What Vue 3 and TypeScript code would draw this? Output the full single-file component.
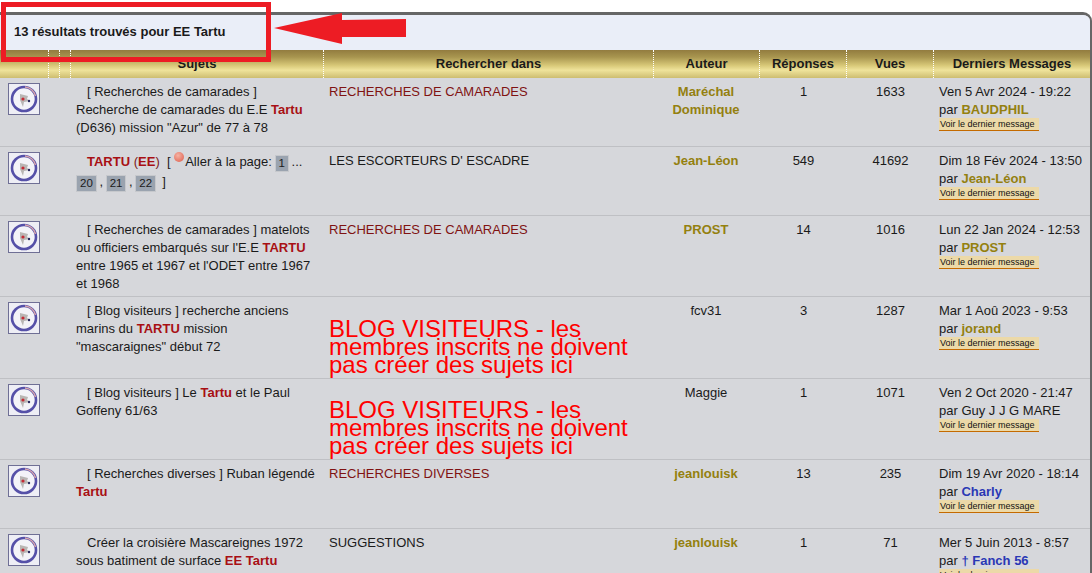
<script setup lang="ts">
interface Part { t: string; c?: string; br?: boolean }
interface Row {
  h: number
  subject: Part[]
  pager?: boolean
  forum: string
  forumKind: 'dark' | 'black' | 'big'
  author: string
  authorPlain?: boolean
  replies: string
  views: string
  date: string
  by: string
  byKind: 'gold' | 'blue' | 'black'
}
const rows: Row[] = [
  { h: 69, subject: [{ t: '[ Recherches de camarades ] Recherche de camarades du E.E ' }, { t: 'Tartu', c: 'hl' }, { t: ' (D636) mission "Azur" de 77 à 78' }], forum: 'RECHERCHES DE CAMARADES', forumKind: 'dark', author: 'Maréchal Dominique', replies: '1', views: '1633', date: 'Ven 5 Avr 2024 - 19:22', by: 'BAUDPHIL', byKind: 'gold' },
  { h: 69, subject: [], pager: true, forum: "LES ESCORTEURS D' ESCADRE", forumKind: 'black', author: 'Jean-Léon', replies: '549', views: '41692', date: 'Dim 18 Fév 2024 - 13:50', by: 'Jean-Léon', byKind: 'gold' },
  { h: 81, subject: [{ t: '[ Recherches de camarades ] matelots', br: true }, { t: 'ou officiers embarqués sur l\'E.E ' }, { t: 'TARTU', c: 'hl' }, { t: ' entre 1965 et 1967 et l\'ODET entre 1967 et 1968' }], forum: 'RECHERCHES DE CAMARADES', forumKind: 'dark', author: 'PROST', replies: '14', views: '1016', date: 'Lun 22 Jan 2024 - 12:53', by: 'PROST', byKind: 'gold' },
  { h: 82, subject: [{ t: '[ Blog visiteurs ] recherche anciens marins du ' }, { t: 'TARTU', c: 'hl' }, { t: ' mission "mascaraignes" début 72' }], forum: 'BLOG VISITEURS - les membres inscrits ne doivent pas créer des sujets ici', forumKind: 'big', author: 'fcv31', authorPlain: true, replies: '3', views: '1287', date: 'Mar 1 Aoû 2023 - 9:53', by: 'jorand', byKind: 'gold' },
  { h: 81, subject: [{ t: '[ Blog visiteurs ] Le ' }, { t: 'Tartu', c: 'hl' }, { t: ' et le Paul Goffeny 61/63' }], forum: 'BLOG VISITEURS - les membres inscrits ne doivent pas créer des sujets ici', forumKind: 'big', author: 'Maggie', authorPlain: true, replies: '1', views: '1071', date: 'Ven 2 Oct 2020 - 21:47', by: 'Guy J J G MARE', byKind: 'black' },
  { h: 69, subject: [{ t: '[ Recherches diverses ] Ruban légendé ' }, { t: 'Tartu', c: 'hl' }], forum: 'RECHERCHES DIVERSES', forumKind: 'dark', author: 'jeanlouisk', replies: '13', views: '235', date: 'Dim 19 Avr 2020 - 18:14', by: 'Charly', byKind: 'blue' },
  { h: 69, subject: [{ t: 'Créer la croisière Mascareignes 1972 sous batiment de surface ' }, { t: 'EE Tartu', c: 'hl' }], forum: 'SUGGESTIONS', forumKind: 'black', author: 'jeanlouisk', replies: '1', views: '71', date: 'Mer 5 Juin 2013 - 8:57', by: '† Fanch 56', byKind: 'blue' },
]
const heads = ['', '', '', 'Sujets', 'Rechercher dans', 'Auteur', 'Réponses', 'Vues', 'Derniers Messages']
</script>

<template>
  <div class="page">
    <div class="panel">
      <div class="title">13 résultats trouvés pour EE Tartu</div>
      <div class="grid head">
        <div v-for="(h, i) in heads" :key="i" class="hcell">{{ h }}</div>
      </div>
      <div v-for="(r, i) in rows" :key="i" class="grid row" :style="{ height: r.h + 'px' }">
        <div class="iconcell">
          <svg class="icon" viewBox="0 0 32 32" width="32" height="32">
            <rect x="0.5" y="0.5" width="31" height="31" fill="#eeeef5" stroke="#6f6f95" />
            <circle cx="16" cy="16" r="12" fill="#f3f3f8" stroke="#5550a8" stroke-width="2.6" />
            <path d="M17 4a12 12 0 0 1 10.5 9" fill="none" stroke="#d9a5ad" stroke-width="1.6" />
            <path d="M12 11l8 2-1 3 3 2-6 1-1 5-3-7z" fill="#b9b6b4" />
            <circle cx="15" cy="16" r="1.6" fill="#c52a35" />
            <circle cx="21" cy="18" r="1.2" fill="#26265c" />
          </svg>
        </div>
        <div class="subject">
          <template v-if="r.pager">
            <span class="ind hl">TARTU</span> <span class="brown">(</span><span class="hl">EE</span><span class="brown">)</span>&nbsp; [ <span class="dot"></span>Aller à la page: <span class="pg">1</span> ...<br />
            <span class="pg first">20</span> , <span class="pg">21</span> , <span class="pg">22</span> &nbsp;]
          </template>
          <template v-else>
            <span class="ind"></span><template v-for="(p, j) in r.subject" :key="j"><span :class="p.c">{{ p.t }}</span><br v-if="p.br" /></template>
          </template>
        </div>
        <div class="forum" :class="r.forumKind">{{ r.forum }}</div>
        <div class="author" :class="{ plain: r.authorPlain }">{{ r.author }}</div>
        <div class="num">{{ r.replies }}</div>
        <div class="num">{{ r.views }}</div>
        <div class="last">
          <div>{{ r.date }}</div>
          <div>par <span class="by" :class="r.byKind">{{ r.by }}</span></div>
          <span class="see">Voir le dernier message</span>
        </div>
      </div>
    </div>
    <div class="callout"></div>
    <svg class="arrow" width="134" height="31" viewBox="0 0 134 31">
      <path d="M0 15L68 0V7L132 6V24L68 24V31Z" fill="#ed1c24" />
    </svg>
  </div>
</template>

<style scoped>
.page {
  position: relative;
  width: 1092px;
  height: 573px;
  overflow: hidden;
  background: #fff;
  font-family: "Liberation Sans", Arial, sans-serif;
  font-size: 13px;
  line-height: 18px;
  color: #1a1a1a;
}
.panel {
  margin-top: 12px;
  border-top: 3px solid #666;
  border-right: 2px solid #666;
  border-top-right-radius: 9px;
  background: #d6d7db;
  height: 561px;
  overflow: hidden;
}
.title {
  height: 35px;
  padding-left: 14px;
  background: #eaeef8;
  font-size: 13px;
  font-weight: bold;
  line-height: 34px;
}
.grid {
  display: grid;
  grid-template-columns: 49px 11px 11px 253px 330px 106px 87px 87px 156px;
}
.head {
  height: 28px;
  background: linear-gradient(#927c3f 0%, #a8954f 25%, #d8c878 55%, #efe39b 72%, #cdbd70 100%);
}
.hcell {
  border-right: 1px dotted #fff;
  text-align: center;
  font-weight: bold;
  font-size: 13px;
  line-height: 26px;
  padding-top: 1px;
}
.hcell:last-child { border-right: 0; }
.row {
  box-sizing: border-box;
  border-bottom: 1px solid #bfc0c4;
}
.row > .subject { grid-column: 2 / span 3; padding: 5px 8px 0 27px; }
.iconcell { padding: 5px 0 0 8px; }
.icon { display: block; }
.ind { margin-left: 11px; }
.hl { color: #a80f14; font-weight: bold; }
.brown { color: #7a1a1a; }
.dot {
  display: inline-block;
  width: 10px;
  height: 10px;
  border-radius: 50%;
  background: radial-gradient(circle at 40% 35%, #f6b3a4, #dd5a48);
  vertical-align: 4px;
  margin-right: 1px;
}
.pg {
  display: inline-block;
  box-sizing: border-box;
  height: 17px;
  padding: 0 3px;
  background: #9aa3af;
  border: 1px solid #c6c8cc;
  font-size: 11.5px;
  line-height: 15px;
  text-align: center;
  margin: 0 -1px 1px;
  vertical-align: -1px;
}
.pg.first { margin-left: 0; }
.forum { padding: 5px 5px 0; }
.forum.dark { color: #801212; }
.forum.big {
  align-self: end;
  color: #f00;
  font-size: 24px;
  line-height: 18px;
  padding: 0 5px 4px;
}
.author {
  text-align: center;
  font-weight: bold;
  color: #94800f;
  padding: 5px 9px 0 7px;
}
.author.plain { font-weight: normal; color: #1a1a1a; }
.num { text-align: center; padding-top: 5px; }
.last { padding: 5px 0 0 5px; white-space: nowrap; }
.by { font-weight: bold; }
.by.gold { color: #94800f; }
.by.blue { color: #2a37b5; }
.by.black { font-weight: normal; }
.see {
  display: block;
  width: 100px;
  box-sizing: border-box;
  height: 13px;
  margin-top: -1px;
  padding: 0 1px;
  background: #ecd9a8;
  border-bottom: 1px solid #c46a00;
  font-size: 9px;
  line-height: 12px;
  color: #111;
  white-space: nowrap;
}
.callout {
  position: absolute;
  left: 1px;
  top: 2px;
  width: 260px;
  height: 50px;
  border: 5px solid #ed1c24;
}
.arrow {
  position: absolute;
  left: 274px;
  top: 13px;
}
</style>
